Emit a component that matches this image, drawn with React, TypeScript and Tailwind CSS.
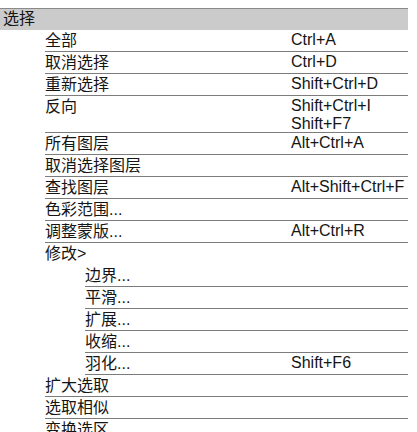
import React from "react";

type Item = {
  label: string;
  keys?: string[];
  sub?: boolean;
  noLine?: boolean;
};

const items: Item[] = [
  { label: "全部", keys: ["Ctrl+A"] },
  { label: "取消选择", keys: ["Ctrl+D"] },
  { label: "重新选择", keys: ["Shift+Ctrl+D"] },
  { label: "反向", keys: ["Shift+Ctrl+I", "Shift+F7"] },
  { label: "所有图层", keys: ["Alt+Ctrl+A"] },
  { label: "取消选择图层" },
  { label: "查找图层", keys: ["Alt+Shift+Ctrl+F"] },
  { label: "色彩范围..." },
  { label: "调整蒙版...", keys: ["Alt+Ctrl+R"] },
  { label: "修改>", noLine: true },
  { label: "边界...", sub: true },
  { label: "平滑...", sub: true },
  { label: "扩展...", sub: true },
  { label: "收缩...", sub: true },
  { label: "羽化...", keys: ["Shift+F6"], sub: true },
  { label: "扩大选取" },
  { label: "选取相似" },
  { label: "变换选区" },
];

const MenuRow: React.FC<{ item: Item }> = ({ item }) => {
  const twoLine = item.keys && item.keys.length > 1;
  return (
    <div
      className={`flex ${item.sub ? "ml-[85px] w-[323px]" : "ml-[45px] w-[363px]"} ${
        item.noLine ? "" : "border-b border-[#7c7c7c]"
      } ${twoLine ? "h-[37px]" : "h-[22px]"}`}
    >
      <div className="flex-1 pt-[1px] leading-[20px]">{item.label}</div>
      <div className="w-[117px] pt-[1px] leading-[18px]">
        {item.keys?.map((k) => (
          <div key={k}>{k}</div>
        ))}
      </div>
    </div>
  );
};

export default function App() {
  return (
    <div
      className="w-[417px] h-[432px] overflow-hidden bg-white text-[16px] text-[#151515]"
      style={{ fontFamily: '"Liberation Sans", "Noto Sans CJK SC", sans-serif' }}
    >
      <div className="pt-[8px]">
        <div className="w-[408px] h-[22px] bg-[#cbcbcb] border-t border-[#8a8a8a] pl-[3px] leading-[20px]">
          选择
        </div>
        {items.map((item) => (
          <MenuRow key={item.label} item={item} />
        ))}
      </div>
    </div>
  );
}
